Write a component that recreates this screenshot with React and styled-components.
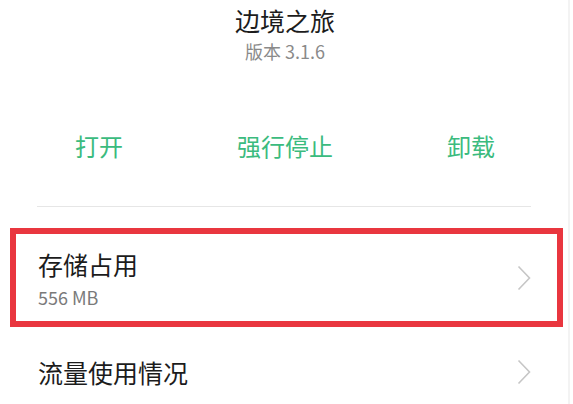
import styled, { createGlobalStyle } from 'styled-components';

const GlobalStyle = createGlobalStyle`
  html, body {
    margin: 0;
    padding: 0;
    background: #ffffff;
  }
  body {
    font-family: "Noto Sans CJK SC", "Noto Sans", sans-serif;
  }
`;

const Chevron = () => (
  <svg width="14" height="26" viewBox="0 0 14 26">
    <path d="M1.5 1.5 L12.5 13 L1.5 24.5" fill="none" stroke="#c6c6c6" strokeWidth="1.6" />
  </svg>
);

function App() {
  return (
    <Page>
      <GlobalStyle />
      <Header>
        <AppName>边境之旅</AppName>
        <Version>版本 3.1.6</Version>
      </Header>
      <Actions>
        <Action>打开</Action>
        <Action>强行停止</Action>
        <Action>卸载</Action>
      </Actions>
      <Divider />
      <HighlightRow>
        <RowText>
          <RowTitle>存储占用</RowTitle>
          <RowSub>556 MB</RowSub>
        </RowText>
        <Chevron />
      </HighlightRow>
      <Row>
        <RowTitle>流量使用情况</RowTitle>
        <Chevron />
      </Row>
    </Page>
  );
}

export default App;

const Page = styled.div`
  width: 570px;
  height: 404px;
  overflow: hidden;
  border-right: 2px solid #f3f3f3;
  box-sizing: border-box;
  display: flex;
  flex-direction: column;
`;

const Header = styled.div`
  display: flex;
  flex-direction: column;
  align-items: center;
  padding-left: 2px;
`;

const AppName = styled.div`
  font-size: 25px;
  line-height: 40px;
  height: 40px;
  color: #1c1c1c;
`;

const Version = styled.div`
  font-size: 18px;
  line-height: 22px;
  color: #8a8a8a;
`;

const Actions = styled.div`
  display: grid;
  grid-template-columns: repeat(3, 186px);
  padding-left: 6px;
  margin-top: 62px;
  height: 44px;
`;

const Action = styled.div`
  text-align: center;
  font-size: 24px;
  line-height: 44px;
  color: #3bbb7e;
`;

const Divider = styled.div`
  height: 1px;
  background: #e6e6e6;
  margin: 38px 37px 0 37px;
`;

const HighlightRow = styled.div`
  margin: 21px 5px 0 10px;
  border: 6px solid #e9363f;
  padding: 13px 26px 12px 22px;
  display: flex;
  align-items: center;
  justify-content: space-between;
`;

const RowText = styled.div`
  display: flex;
  flex-direction: column;
`;

const RowTitle = styled.div`
  font-size: 25px;
  line-height: 34px;
  color: #1c1c1c;
`;

const RowSub = styled.div`
  font-size: 18px;
  line-height: 24px;
  color: #7a7a7a;
  margin-top: 4px;
`;

const Row = styled.div`
  display: flex;
  align-items: center;
  justify-content: space-between;
  margin-top: 21px;
  height: 48px;
  padding: 0 37px 0 38px;
`;
